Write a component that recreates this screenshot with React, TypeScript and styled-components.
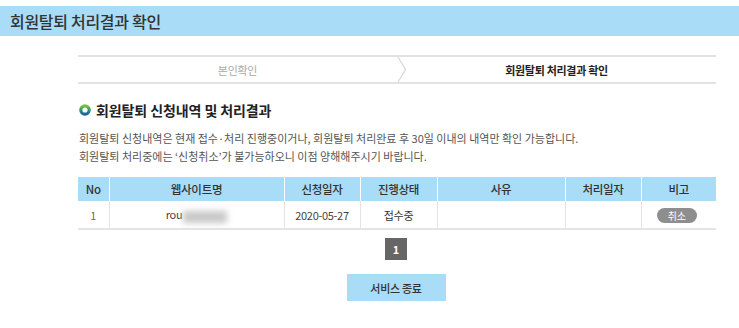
import React from "react";
import styled, { createGlobalStyle } from "styled-components";

const Global = createGlobalStyle`
  html, body { margin: 0; padding: 0; background: #fff; }
  body { font-family: "Noto Sans CJK KR", "Noto Sans", sans-serif; color: #333; }
`;

const Page = styled.div`
  padding-top: 6px;
`;

const TitleBar = styled.h1`
  margin: 0;
  height: 30px;
  background: #a9dcf7;
  padding-left: 10px;
  font-size: 16px;
  font-weight: 500;
  line-height: 30px;
  color: #333;
  letter-spacing: -0.3px;
`;

const Content = styled.div`
  width: 638px;
  margin-left: 78px;
  padding-top: 19px;
`;

const Stepper = styled.div`
  display: flex;
  align-items: stretch;
  height: 25px;
  border-top: 2px solid #e2e2e2;
  border-bottom: 2px solid #e2e2e2;
`;

const Step = styled.div<{ $active?: boolean }>`
  flex: ${(p) => (p.$active ? "1" : "0 0 319px")};
  display: flex;
  align-items: center;
  justify-content: center;
  font-size: 11px;
  letter-spacing: -0.3px;
  color: ${(p) => (p.$active ? "#222" : "#aaa")};
  font-weight: ${(p) => (p.$active ? 700 : 400)};
  padding-right: ${(p) => (p.$active ? "10px" : "0")};
`;

const Chevron = styled.svg`
  width: 10px;
  height: 25px;
  flex: none;
  display: block;
`;

const SectionTitle = styled.h2`
  display: flex;
  align-items: center;
  gap: 5px;
  margin: 16px 0 0 1px;
  font-size: 14px;
  font-weight: 700;
  height: 20px;
  line-height: 20px;
  color: #222;
  letter-spacing: -0.1px;
`;

const Bullet = styled.svg`
  width: 12px;
  height: 12px;
  display: block;
`;

const Desc = styled.p`
  margin: 9px 0 0 1px;
  font-size: 11px;
  line-height: 18px;
  color: #555;
  letter-spacing: 0;
`;

const Table = styled.table`
  margin-top: 12px;
  width: 638px;
  border-collapse: collapse;
  table-layout: fixed;
  font-size: 11px;
  letter-spacing: -0.3px;
  border-bottom: 2px solid #e4e4e4;
`;

const Th = styled.th`
  background: #a9dcf7;
  height: 24px;
  padding: 0;
  font-weight: 500;
  font-size: 11.5px;
  color: #333;
  border-left: 1px solid #fff;
  &:first-child { border-left: none; }
`;

const Td = styled.td<{ $color?: string }>`
  height: 27px;
  padding: 0;
  text-align: center;
  color: ${(p) => p.$color || "#444"};
  border-left: 1px solid #e4e4e4;
  &:first-child { border-left: none; }
`;

const Blur = styled.span`
  display: inline-block;
  width: 44px;
  height: 12px;
  vertical-align: middle;
  background: #c8c8c8;
  filter: blur(3px);
  margin-left: 1px;
`;

const Pill = styled.span`
  display: inline-block;
  width: 40px;
  height: 15px;
  line-height: 15px;
  border-radius: 8px;
  background: #8e8e8e;
  color: #fff;
  font-size: 10px;
  margin-right: 4px;
`;

const Pager = styled.div`
  display: flex;
  justify-content: center;
  margin-top: 8px;
`;

const PageNum = styled.span`
  width: 22px;
  height: 22px;
  display: flex;
  align-items: center;
  justify-content: center;
  background: #666;
  color: #fff;
  font-size: 11px;
  font-weight: 700;
  margin-left: -2px;
`;

const Actions = styled.div`
  display: flex;
  justify-content: center;
  margin-top: 14px;
`;

const EndButton = styled.button`
  width: 99px;
  height: 27px;
  border: none;
  background: #a9dcf7;
  color: #333;
  font-family: inherit;
  font-size: 11px;
  font-weight: 500;
  letter-spacing: -0.3px;
  margin-left: -2px;
  padding: 0;
`;

const cols = [31, 175, 76, 77, 128, 76, 75];
const heads = ["No", "웹사이트명", "신청일자", "진행상태", "사유", "처리일자", "비고"];

export default function App() {
  return (
    <Page>
      <Global />
      <TitleBar>회원탈퇴 처리결과 확인</TitleBar>
      <Content>
        <Stepper>
          <Step>본인확인</Step>
          <Chevron viewBox="0 0 10 25">
            <polyline points="1,0 8.5,12.5 1,25" fill="none" stroke="#d6d6d6" strokeWidth="1.2" />
          </Chevron>
          <Step $active>회원탈퇴 처리결과 확인</Step>
        </Stepper>
        <SectionTitle>
          <Bullet viewBox="0 0 12 12">
            <defs>
              <linearGradient id="bg" x1="0" y1="0" x2="0" y2="1">
                <stop offset="0" stopColor="#7cc242" />
                <stop offset="0.5" stopColor="#2a9a6a" />
                <stop offset="1" stopColor="#1a5fa8" />
              </linearGradient>
            </defs>
            <circle cx="6" cy="6" r="4.2" fill="none" stroke="url(#bg)" strokeWidth="3.2" />
          </Bullet>
          회원탈퇴 신청내역 및 처리결과
        </SectionTitle>
        <Desc>
          회원탈퇴 신청내역은 현재 접수·처리 진행중이거나, 회원탈퇴 처리완료 후 30일 이내의 내역만 확인 가능합니다.
          <br />
          회원탈퇴 처리중에는 ‘신청취소’가 불가능하오니 이점 양해해주시기 바랍니다.
        </Desc>
        <Table>
          <colgroup>
            {cols.map((w, i) => (
              <col key={i} style={{ width: w }} />
            ))}
          </colgroup>
          <thead>
            <tr>
              {heads.map((h) => (
                <Th key={h}>{h}</Th>
              ))}
            </tr>
          </thead>
          <tbody>
            <tr>
              <Td $color="#8a6a2a">1</Td>
              <Td>
                rou<Blur />
              </Td>
              <Td>2020-05-27</Td>
              <Td $color="#333">접수중</Td>
              <Td />
              <Td />
              <Td>
                <Pill>취소</Pill>
              </Td>
            </tr>
          </tbody>
        </Table>
        <Pager>
          <PageNum>1</PageNum>
        </Pager>
        <Actions>
          <EndButton>서비스 종료</EndButton>
        </Actions>
      </Content>
    </Page>
  );
}
